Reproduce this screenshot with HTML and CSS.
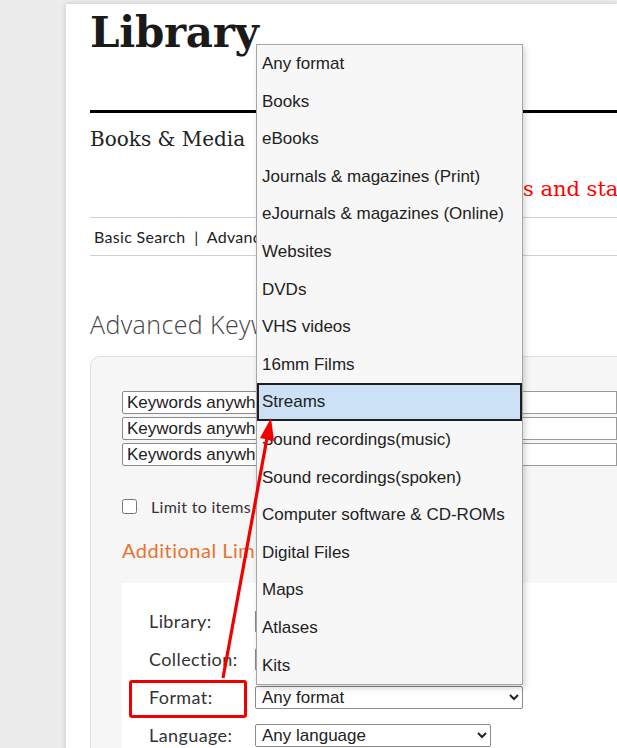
FILE: index.html
```html
<!DOCTYPE html>
<html>
<head>
<meta charset="utf-8">
<link rel="stylesheet" href="styles.css">
</head>
<body>
<div class="page">
  <h1 class="title">Library</h1>
  <div class="rule"></div>
  <div class="subtitle">Books &amp; Media</div>
  <div class="notice"><span class="notice-head">Opening hour</span><span class="notice-tail">s and status</span></div>
  <nav class="crumbs">Basic Search &nbsp;|&nbsp; Advanced Search</nav>
  <h2 class="section-title">Advanced Keyword Search</h2>
  <div class="panel">
    <div class="kw-rows">
      <div class="kw-row"><select class="kw-select"><option>Keywords anywhere</option></select><input class="kw-input" type="text"></div>
      <div class="kw-row"><select class="kw-select"><option>Keywords anywhere</option></select><input class="kw-input" type="text"></div>
      <div class="kw-row"><select class="kw-select"><option>Keywords anywhere</option></select><input class="kw-input" type="text"></div>
    </div>
    <label class="limit"><input type="checkbox" class="check"> <span>Limit to items available</span></label>
    <h3 class="limits-title">Additional Limits</h3>
    <div class="limits">
      <div class="limit-row"><span class="lbl">Library:</span><select class="sel sel-wide"><option>Any library</option></select></div>
      <div class="limit-row"><span class="lbl">Collection:</span><select class="sel sel-wide"><option>Any collection</option></select></div>
      <div class="limit-row"><span class="lbl">Format:</span><select class="sel sel-wide"><option>Any format</option></select></div>
      <div class="limit-row"><span class="lbl">Language:</span><select class="sel sel-lang"><option>Any language</option></select></div>
    </div>
  </div>
</div>

<ul class="dropdown">
  <li>Any format</li>
  <li>Books</li>
  <li>eBooks</li>
  <li>Journals &amp; magazines (Print)</li>
  <li>eJournals &amp; magazines (Online)</li>
  <li>Websites</li>
  <li>DVDs</li>
  <li>VHS videos</li>
  <li>16mm Films</li>
  <li class="active">Streams</li>
  <li>Sound recordings(music)</li>
  <li>Sound recordings(spoken)</li>
  <li>Computer software &amp; CD-ROMs</li>
  <li>Digital Files</li>
  <li>Maps</li>
  <li>Atlases</li>
  <li>Kits</li>
</ul>

<div class="highlight-box"></div>
<svg class="arrow" width="617" height="748" viewBox="0 0 617 748">
  <line x1="223" y1="678" x2="267" y2="438" stroke="#f20000" stroke-width="3.2"/>
  <polygon points="271,418 274,441 260,438" fill="#f20000"/>
</svg>
</body>
</html>
```
FILE: styles.css
```css
html, body {
  margin: 0;
  padding: 0;
}
body {
  background: #ececec;
  width: 617px;
  height: 748px;
  overflow: hidden;
  position: relative;
  font-family: "Liberation Sans", Arial, sans-serif;
}
.page {
  margin-left: 66px;
  margin-top: 4px;
  background: #fff;
  padding-left: 24px;
  height: 900px;
  box-shadow: -3px 0 4px rgba(0,0,0,0.06), 0 -2px 3px rgba(0,0,0,0.06);
}
.title {
  margin: 0;
  padding-top: 3px;
  font-family: "DejaVu Serif", serif;
  font-weight: bold;
  font-size: 42px;
  line-height: 52px;
  color: #1a1a1a;
  letter-spacing: -0.3px;
}
.rule {
  margin-top: 51px;
  height: 3px;
  background: #000;
}
.subtitle {
  margin-top: 13px;
  font-family: "DejaVu Serif", serif;
  font-size: 20px;
  line-height: 26px;
  color: #222;
}
.notice {
  display: flex;
  margin-top: 24px;
  height: 26px;
  font-family: "DejaVu Serif", serif;
  font-size: 21px;
  line-height: 26px;
  color: #f00;
  white-space: nowrap;
  overflow: hidden;
}
.notice-head {
  flex: 0 0 433px;
  text-align: right;
  overflow: hidden;
}
.notice-tail {
  flex: none;
}
.crumbs {
  margin-top: 15px;
  border-top: 1px solid #cfcfcf;
  border-bottom: 1px solid #cfcfcf;
  height: 37px;
  line-height: 37px;
  padding-left: 4px;
  font-family: Lato, "Open Sans", sans-serif;
  font-size: 16px;
  letter-spacing: 0.3px;
  color: #222;
}
.section-title {
  margin: 52px 0 0;
  font-family: "Open Sans", Lato, sans-serif;
  font-weight: 300;
  font-size: 25px;
  letter-spacing: 0.4px;
  line-height: 32px;
  color: #444;
}
.panel {
  margin-top: 16px;
  border: 1px solid #dedede;
  border-right: none;
  border-radius: 10px 0 0 0;
  background: #f6f6f6;
  padding: 34px 0 0 31px;
}
.kw-rows {
  display: flex;
  flex-direction: column;
  gap: 3px;
}
.kw-row {
  display: flex;
  height: 23px;
}
.kw-select {
  width: 200px;
  height: 23px;
  font-family: "Liberation Sans", Arial, sans-serif;
  font-size: 17px;
  color: #222;
  border: 1px solid #8a8a8a;
  border-radius: 2px;
  background: #fff;
  padding: 0 4px;
  margin: 0;
  appearance: none;
}
.kw-input {
  width: 400px;
  height: 23px;
  box-sizing: border-box;
  border: 1px solid #9a9a9a;
  margin: 0 0 0 2px;
}
.limit {
  display: flex;
  align-items: center;
  margin-top: 30px;
  font-family: Lato, "Open Sans", sans-serif;
  font-size: 16px;
  letter-spacing: 0.3px;
  color: #333;
  height: 20px;
}
.check {
  margin: 0 14px 0 0;
  width: 15px;
  height: 15px;
}
.limits-title {
  margin: 21px 0 0;
  font-family: Lato, "Open Sans", sans-serif;
  font-weight: normal;
  font-size: 20px;
  letter-spacing: 0.5px;
  line-height: 26px;
  color: #e8732d;
}
.limits {
  margin-top: 20px;
  background: #fff;
  padding: 19px 0 0 27px;
  height: 200px;
}
.limit-row {
  display: flex;
  align-items: center;
  height: 38px;
}
.lbl {
  width: 106px;
  font-family: Lato, "Open Sans", sans-serif;
  font-size: 18px;
  letter-spacing: 0.4px;
  color: #333;
}
.sel {
  height: 23px;
  font-family: "Liberation Sans", Arial, sans-serif;
  font-size: 17px;
  color: #222;
  border: 1px solid #8a8a8a;
  border-radius: 2px;
  background: #fff;
  padding: 0 2px;
}
.sel-wide { width: 268px; }
.sel-lang { width: 236px; }

.dropdown {
  position: absolute;
  left: 256px;
  top: 44px;
  width: 265px;
  margin: 0;
  padding: 0;
  list-style: none;
  background: #f7f7f7;
  border: 1px solid #a6a6a6;
  box-shadow: 2px 3px 6px rgba(0,0,0,0.18);
  font-family: "Liberation Sans", Arial, sans-serif;
  font-size: 17px;
  color: #222;
}
.dropdown li {
  height: 37.6px;
  line-height: 37.6px;
  padding-left: 5px;
  box-sizing: border-box;
  white-space: nowrap;
}
.dropdown li.active {
  background: #cce1f6;
  border: 2px solid #1e1e1e;
  padding-left: 3px;
  line-height: 33.6px;
}
.highlight-box {
  position: absolute;
  left: 129px;
  top: 680px;
  width: 112px;
  height: 32px;
  border: 3px solid #f20000;
  border-radius: 3px;
}
.arrow {
  position: absolute;
  left: 0;
  top: 0;
  pointer-events: none;
}
```
